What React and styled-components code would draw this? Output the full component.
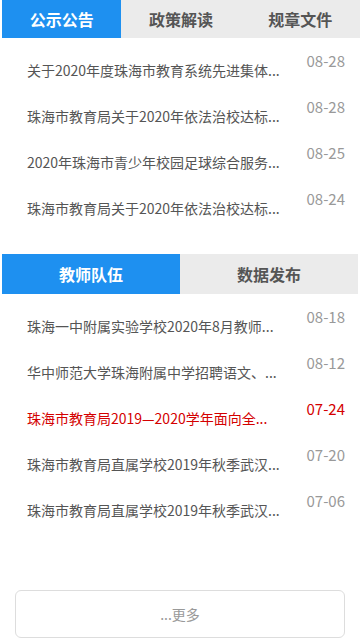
import React, { useState } from "react";
import styled, { createGlobalStyle } from "styled-components";

const GlobalStyle = createGlobalStyle`
  html, body {
    margin: 0;
    padding: 0;
    background: #fff;
    font-family: "Noto Sans CJK SC", "Noto Sans", sans-serif;
  }
`;

const notices = [
  { title: "关于2020年度珠海市教育系统先进集体...", date: "08-28" },
  { title: "珠海市教育局关于2020年依法治校达标...", date: "08-28" },
  { title: "2020年珠海市青少年校园足球综合服务...", date: "08-25" },
  { title: "珠海市教育局关于2020年依法治校达标...", date: "08-24" },
];

const teachers = [
  { title: "珠海一中附属实验学校2020年8月教师...", date: "08-18" },
  { title: "华中师范大学珠海附属中学招聘语文、...", date: "08-12" },
  { title: "珠海市教育局2019—2020学年面向全...", date: "07-24", hot: true },
  { title: "珠海市教育局直属学校2019年秋季武汉...", date: "07-20" },
  { title: "珠海市教育局直属学校2019年秋季武汉...", date: "07-06" },
];

const TabBar = ({ tabs, height, inset = 0 }) => {
  const [active, setActive] = useState(0);
  return (
    <Tabs $height={height} $inset={inset}>
      {tabs.map((t, i) => (
        <Tab key={t} $active={i === active} onClick={() => setActive(i)}>
          {t}
        </Tab>
      ))}
    </Tabs>
  );
};

const NewsList = ({ items }) => (
  <List>
    {items.map((it, i) => (
      <Row key={i} $hot={it.hot}>
        <Title>{it.title}</Title>
        <DateText $hot={it.hot}>{it.date}</DateText>
      </Row>
    ))}
  </List>
);

export default function App() {
  return (
    <Page>
      <GlobalStyle />
      <Section>
        <TabBar tabs={["公示公告", "政策解读", "规章文件"]} height={38} />
        <NewsList items={notices} />
      </Section>
      <Section $top={32}>
        <TabBar tabs={["教师队伍", "数据发布"]} height={40} inset={2} />
        <NewsList items={teachers} />
      </Section>
      <MoreButton>...更多</MoreButton>
    </Page>
  );
}

const Page = styled.div`
  width: 360px;
  height: 640px;
  overflow: hidden;
  display: flex;
  flex-direction: column;
`;

const Section = styled.section`
  margin-top: ${(p) => p.$top || 0}px;
  padding-left: 2px;
`;

const Tabs = styled.div`
  display: flex;
  height: ${(p) => p.$height}px;
  margin-right: ${(p) => p.$inset}px;
  background: #ebebeb;
`;

const Tab = styled.div`
  flex: 1;
  display: flex;
  align-items: center;
  justify-content: center;
  font-size: 16px;
  font-weight: bold;
  color: ${(p) => (p.$active ? "#fff" : "#555")};
  background: ${(p) => (p.$active ? "#1e90f0" : "transparent")};
  cursor: pointer;
`;

const List = styled.ul`
  list-style: none;
  margin: 0;
  padding: 0;
`;

const Row = styled.li`
  height: 46px;
  display: flex;
  align-items: flex-start;
  justify-content: space-between;
  padding: 0 15px 0 25px;
  color: ${(p) => (p.$hot ? "#d40000" : "#555")};
`;

const Title = styled.span`
  margin-top: 24px;
  font-size: 14px;
  line-height: 16px;
  white-space: nowrap;
`;

const DateText = styled.span`
  margin-top: 14px;
  font-size: 15px;
  line-height: 18px;
  color: ${(p) => (p.$hot ? "#d40000" : "#999")};
`;

const MoreButton = styled.button`
  margin: auto 15px 2px;
  height: 48px;
  border: 1px solid #ddd;
  border-radius: 6px;
  background: #fff;
  color: #999;
  font-family: "Noto Sans CJK SC", sans-serif;
  font-size: 14px;
`;
